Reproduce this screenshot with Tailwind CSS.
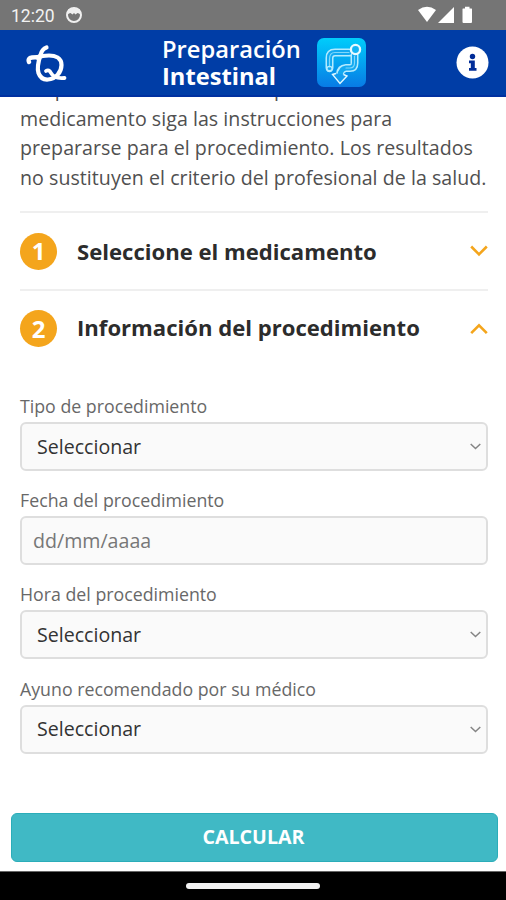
<!DOCTYPE html>
<html lang="es">
<head>
<meta charset="utf-8">
<title>Preparación Intestinal</title>
<script src="https://cdn.jsdelivr.net/npm/@tailwindcss/browser@4"></script>
</head>
<body class="w-[506px] h-[900px] overflow-hidden bg-white font-['Open_Sans',sans-serif] flex flex-col">
<div class="h-[30px] shrink-0 bg-[#757575] flex items-center pl-[11px] pr-[33px] text-white">
  <span class="font-['Roboto',sans-serif] text-[17.5px] leading-[30px] text-[#f2f2f2] pt-[2px]">12:20</span>
  <svg class="ml-[10px]" width="18" height="18" viewBox="0 0 18 18"><circle cx="9" cy="9" r="7" fill="none" stroke="#f0f0f0" stroke-width="2"/><path d="M3 3.500Q9 0 15 3.500L15.500 8.500Q14 7 12.500 7L10.500 8.500L9 7L7.500 8.500L5.500 7Q4 7 2.500 8.500Z" fill="#f0f0f0"/></svg>
  <svg class="ml-auto" width="55" height="18" viewBox="0 0 55 18"><path d="M0 4Q9 -2.500 18 4L9 16Z" fill="#fff"/><path d="M36 1V17H20Z" fill="#fff"/><path d="M44.500 3Q44.500 2.500 45 2.500H47V0.800H51.500V2.500H53.500Q54 2.500 54 3V16Q54 17 53 17H45.500Q44.500 17 44.500 16Z" fill="#fff"/></svg>
</div>
<header class="h-[67px] shrink-0 bg-[#003da6] border-b-2 border-[#0030a0] flex items-center pl-[26px] pr-[17px] text-white">
  <svg class="mt-px" width="42" height="39" viewBox="0 0 42 39" fill="none" stroke="#fff" stroke-linecap="round" stroke-linejoin="round"><path d="M20.500 3.500Q16 5 14.500 11Q10.500 23 12.500 29Q15 36 22 35.500C30 35 35.500 28 35.500 21C35.500 14 29 11.500 23 11.500Q16 11.500 11 13.500" stroke-width="4.200"/><path d="M3 18Q1.500 14 6 13.500Q12 13.500 16 12" stroke-width="4.400"/><path d="M20 27Q23 25 25 29Q28 35 38.500 34" stroke-width="3.800"/></svg>
  <h1 class="ml-[94px] w-[155px] text-[23.7px] leading-[27px] font-semibold whitespace-nowrap">Preparación<br><span class="font-bold">Intestinal</span></h1>
  <svg width="49" height="49" viewBox="0 0 49 49"><defs><linearGradient id="g" x1="0" y1="0" x2="0" y2="1"><stop offset="0" stop-color="#00cdfb"/><stop offset="1" stop-color="#087be5"/></linearGradient></defs><rect width="49" height="49" rx="7" fill="url(#g)"/><g fill="none" stroke-linejoin="round" stroke-linecap="round"><path d="M12.500 29.500V20Q12.500 14.500 18 14.500H32M37.500 17V25Q37.500 30 33 30H29Q23.500 30.500 23 36" stroke="#b4ebff" stroke-width="8"/><path d="M12.500 29.500V20Q12.500 14.500 18 14.500H32M37.500 17V25Q37.500 30 33 30H29Q23.500 30.500 23 38" stroke="#13a9f1" stroke-width="5"/><path d="M12.500 29V21Q12.500 14.500 18 14.500H32M37.500 18V25Q37.500 30 33 30H29" stroke="#7fd8fb" stroke-width="1.200"/></g><path d="M19 35.500L15.500 36.500L23 45.500L30 38L26.500 36.500" fill="#139cee" stroke="#e2f8ff" stroke-width="1.400"/><circle cx="12.500" cy="31" r="2.600" fill="none" stroke="#b4ebff" stroke-width="1.200"/><circle cx="38.500" cy="11.500" r="4.600" fill="#13b4f4" stroke="#e8faff" stroke-width="2.300"/></svg>
  <svg class="ml-auto" width="33" height="33" viewBox="0 0 33 33"><circle cx="16.500" cy="16.500" r="16" fill="#fff"/><circle cx="16.500" cy="10.500" r="2.700" fill="#002c98"/><path d="M13 14.500H18.800V22H20.500V24.800H13V22H14.800V17.300H13Z" fill="#002c98"/></svg>
</header>
<main class="flex-1 min-h-0 overflow-hidden pl-5 pr-[18px] flex flex-col">
  <div class="h-[114px] shrink-0 overflow-hidden flex flex-col justify-end pb-[19px] text-[19.6px] leading-[29.5px] tracking-[0.04px] text-[#505050] whitespace-nowrap">
    <p>Después de seleccionar el tipo de<br>medicamento siga las instrucciones para<br>prepararse para el procedimiento. Los resultados<br>no sustituyen el criterio del profesional de la salud.</p>
  </div>
  <section class="h-[78px] shrink-0 border-t-2 border-[#efefef] flex items-center text-[#2c2c2c]">
    <span class="size-[37px] rounded-full bg-[#f4a51c] text-white text-[24px] font-bold flex items-center justify-center">1</span>
    <h2 class="ml-5 pt-px text-[22.1px] font-bold whitespace-nowrap">Seleccione el medicamento</h2>
    <svg class="ml-auto" width="18" height="12" viewBox="0 0 18 12" fill="none" stroke="#f4a51c" stroke-width="2.600"><path d="M1.200 1.500L9 9.300L16.800 1.500"/></svg>
  </section>
  <section class="h-[78px] shrink-0 border-t-2 border-[#efefef] flex items-center pb-px text-[#2c2c2c]">
    <span class="size-[37px] rounded-full bg-[#f4a51c] text-white text-[24px] font-bold flex items-center justify-center">2</span>
    <h2 class="ml-5 pb-px text-[22.1px] font-bold whitespace-nowrap">Información del procedimiento</h2>
    <svg class="ml-auto" width="18" height="12" viewBox="0 0 18 12" fill="none" stroke="#f4a51c" stroke-width="2.600"><path d="M1.200 10.200L9 2.400L16.800 10.200"/></svg>
  </section>
  <form class="pt-[27px] w-[468px] text-[17.75px] text-[#686868] whitespace-nowrap">
    <div class="h-[94.200px]"><div class="h-[28px] leading-[24px]">Tipo de procedimiento</div>
      <div class="h-[49px] border-2 border-[#dedede] rounded-[6px] bg-[#fafafa] flex items-center justify-between pl-[15px] pr-[5px] text-[19.6px] text-[#333]"><span>Seleccionar</span><svg width="11" height="7" viewBox="0 0 11 7" fill="none" stroke="#858585" stroke-width="1.500"><path d="M.7 1L5.500 5.500L10.300 1"/></svg></div></div>
    <div class="h-[94.200px]"><div class="h-[28px] leading-[24px]">Fecha del procedimiento</div>
      <div class="h-[49px] border-2 border-[#dedede] rounded-[6px] bg-[#fafafa] flex items-center pl-[11px] text-[19.6px] text-[#777]"><span>dd/mm/aaaa</span></div></div>
    <div class="h-[94.200px]"><div class="h-[28px] leading-[24px]">Hora del procedimiento</div>
      <div class="h-[49px] border-2 border-[#dedede] rounded-[6px] bg-[#fafafa] flex items-center justify-between pl-[15px] pr-[5px] text-[19.6px] text-[#333]"><span>Seleccionar</span><svg width="11" height="7" viewBox="0 0 11 7" fill="none" stroke="#858585" stroke-width="1.500"><path d="M.7 1L5.500 5.500L10.300 1"/></svg></div></div>
    <div class="h-[94.200px]"><div class="h-[28px] leading-[24px]">Ayuno recomendado por su médico</div>
      <div class="h-[49px] border-2 border-[#dedede] rounded-[6px] bg-[#fafafa] flex items-center justify-between pl-[15px] pr-[5px] text-[19.6px] text-[#333]"><span>Seleccionar</span><svg width="11" height="7" viewBox="0 0 11 7" fill="none" stroke="#858585" stroke-width="1.500"><path d="M.7 1L5.500 5.500L10.300 1"/></svg></div></div>
  </form>
</main>
<div class="h-[58px] shrink-0 pl-[11px] pr-[8px]"><button class="block w-full h-[49px] pb-[2px] pr-[2px] rounded-[6px] bg-[#40b9c5] border border-[#2badb9] text-white text-[19.6px] font-bold">CALCULAR</button></div>
<footer class="h-[29px] shrink-0 bg-black border-t border-[#666] flex justify-center pt-[11px]"><div class="w-[134px] h-[6px] rounded-sm bg-[#f2f2f2]"></div></footer>
</body>
</html>
